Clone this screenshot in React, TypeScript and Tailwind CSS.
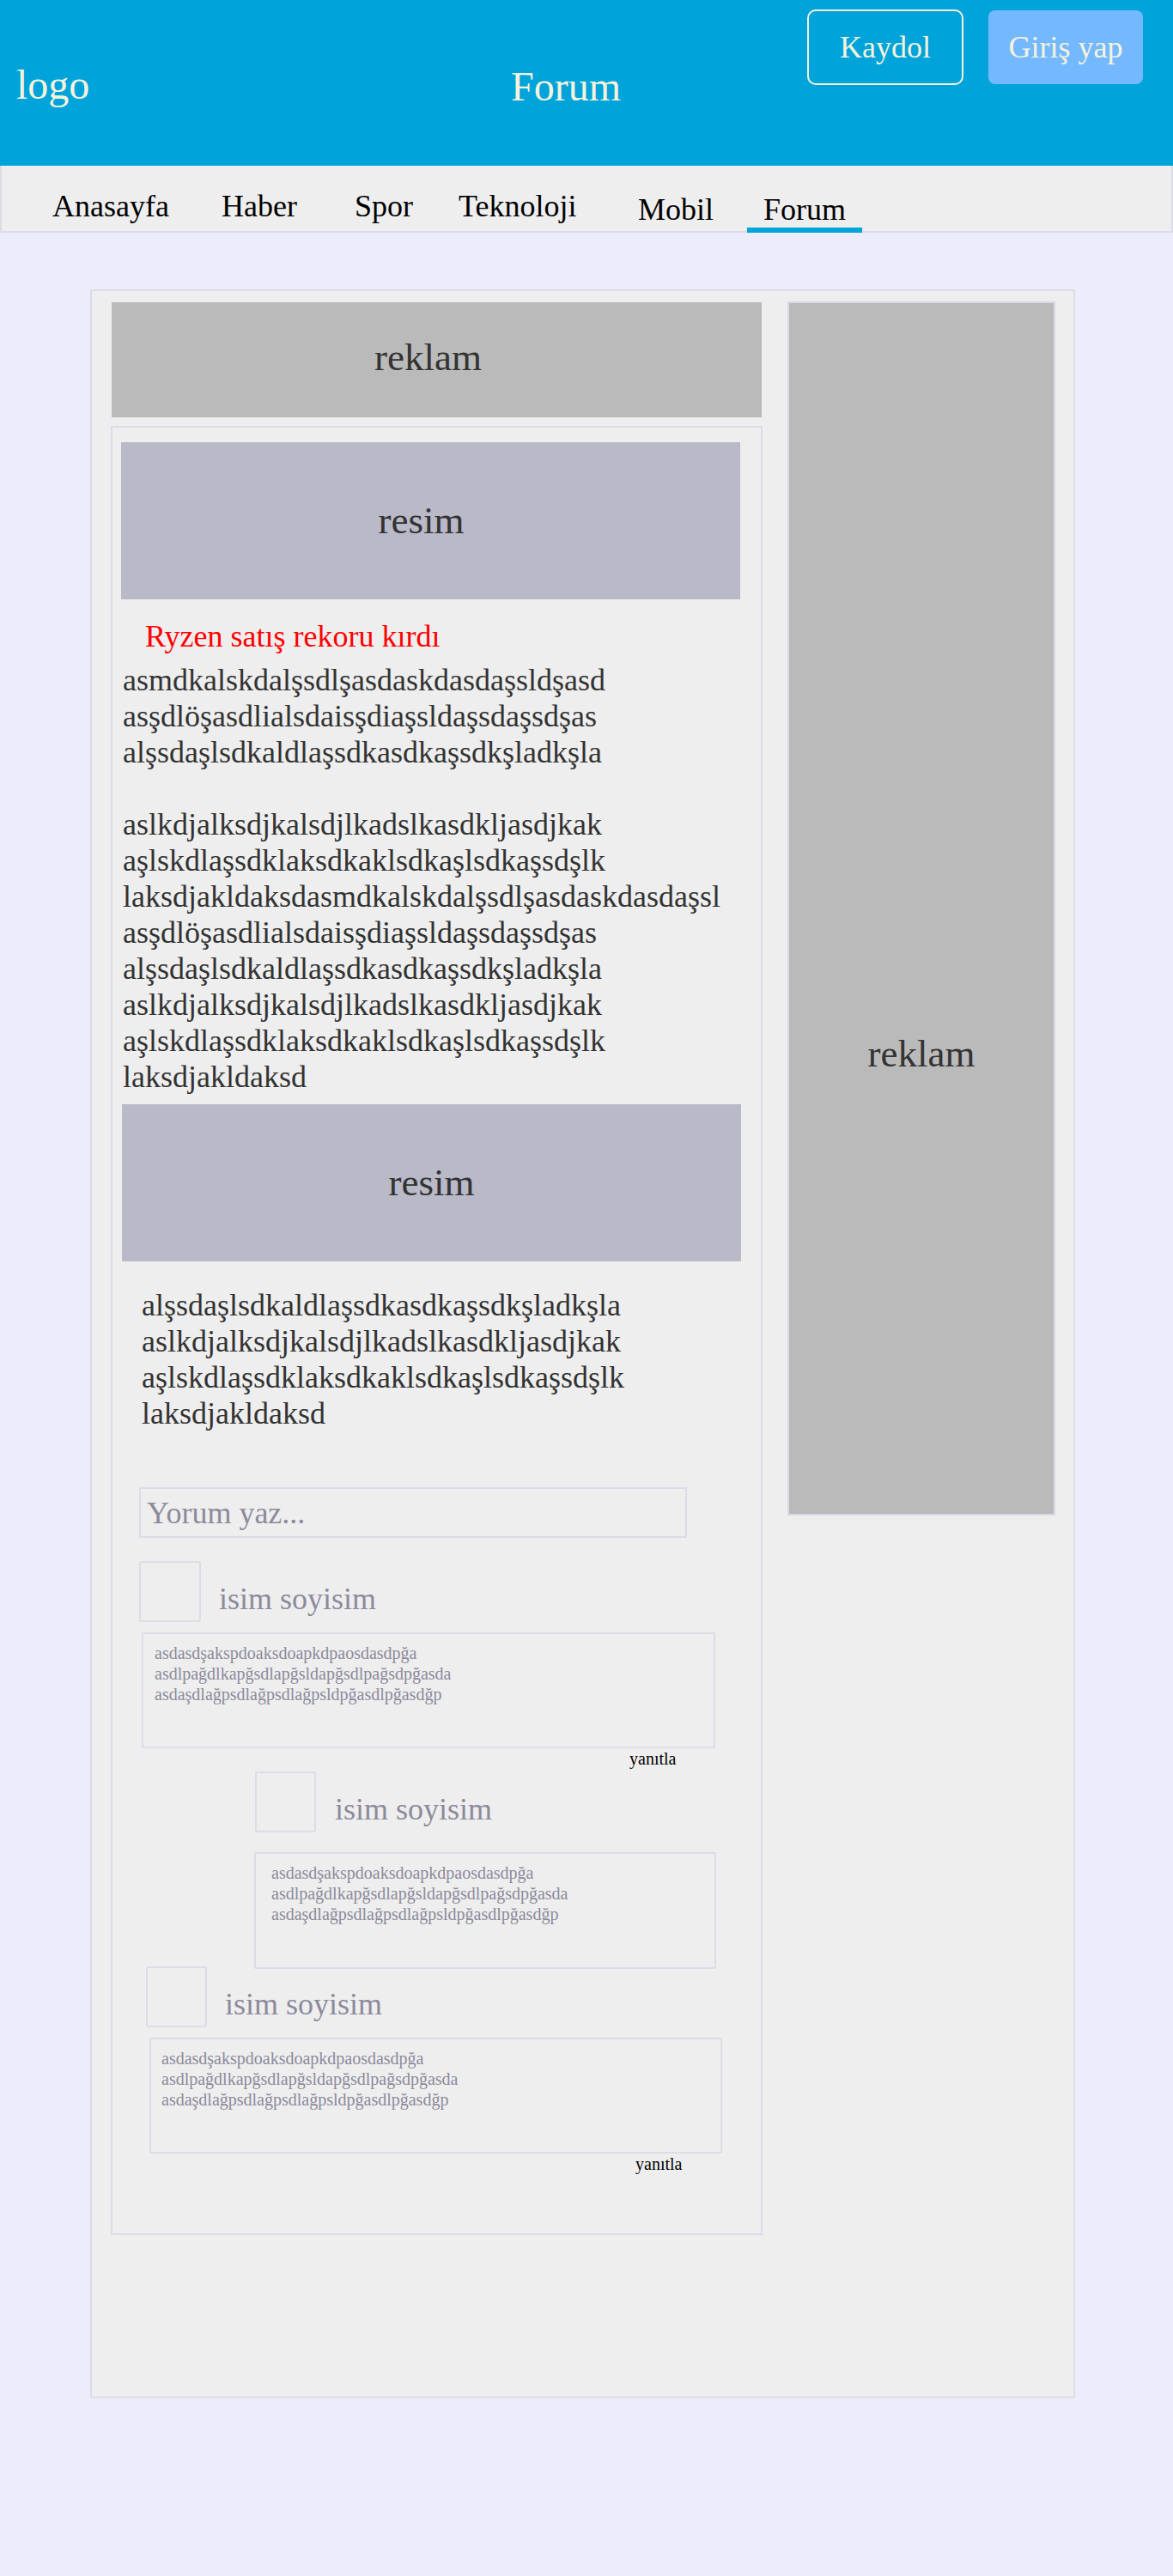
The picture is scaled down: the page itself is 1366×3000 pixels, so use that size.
import React from "react";

const body1 = [
  "asmdkalskdalşsdlşasdaskdasdaşsldşasd",
  "asşdlöşasdlialsdaisşdiaşsldaşsdaşsdşas",
  "alşsdaşlsdkaldlaşsdkasdkaşsdkşladkşla",
  "",
  "aslkdjalksdjkalsdjlkadslkasdkljasdjkak",
  "aşlskdlaşsdklaksdkaklsdkaşlsdkaşsdşlk",
  "laksdjakldaksdasmdkalskdalşsdlşasdaskdasdaşsl",
  "asşdlöşasdlialsdaisşdiaşsldaşsdaşsdşas",
  "alşsdaşlsdkaldlaşsdkasdkaşsdkşladkşla",
  "aslkdjalksdjkalsdjlkadslkasdkljasdjkak",
  "aşlskdlaşsdklaksdkaklsdkaşlsdkaşsdşlk",
  "laksdjakldaksd",
];

const body2 = [
  "alşsdaşlsdkaldlaşsdkasdkaşsdkşladkşla",
  "aslkdjalksdjkalsdjlkadslkasdkljasdjkak",
  "aşlskdlaşsdklaksdkaklsdkaşlsdkaşsdşlk",
  "laksdjakldaksd",
];

const commentLines = [
  "asdasdşakspdoaksdoapkdpaosdasdpğa",
  "asdlpağdlkapğsdlapğsldapğsdlpağsdpğasda",
  "asdaşdlağpsdlağpsdlağpsldpğasdlpğasdğp",
];

function Lines({ lines }: { lines: string[] }) {
  return (
    <>
      {lines.map((l, i) => (
        <div key={i} className="h-[42px] whitespace-nowrap">
          {l}
        </div>
      ))}
    </>
  );
}

function CommentText() {
  return (
    <>
      {commentLines.map((l, i) => (
        <div key={i} className="whitespace-nowrap">
          {l}
        </div>
      ))}
    </>
  );
}

export default function App() {
  return (
    <div className="w-[1366px] min-h-[3000px] bg-[#ececfa] font-['Liberation_Serif',serif]">
      {/* Header */}
      <header className="flex h-[193px] items-start bg-[#00a3da] text-[#f5f3dc]">
        <div className="w-[595px] pl-[19px] pt-[75px] text-[48px] leading-none">logo</div>
        <div className="pt-[77px] text-[48px] leading-none">Forum</div>
        <div className="ml-auto flex items-start gap-[29px] pr-[35px] pt-[11px]">
          <button className="flex h-[88px] w-[182px] items-center justify-center rounded-[10px] border-2 border-[#f5f3dc] text-[36px] leading-none text-[#f5f3dc]">
            Kaydol
          </button>
          <button className="mt-[1px] flex h-[86px] w-[180px] items-center justify-center rounded-[8px] bg-[#74b9ff] text-[36px] leading-none text-[#f5f3dc]">
            Giriş yap
          </button>
        </div>
      </header>

      {/* Nav */}
      <nav className="flex h-[78px] items-start border-x-2 border-b-2 border-[#dcdce8] bg-[#eeeeee] pl-[59px] text-[36px] leading-none text-black">
        <div className="mt-[29px] w-[197px]">Anasayfa</div>
        <div className="mt-[29px] w-[155px]">Haber</div>
        <div className="mt-[29px] w-[121px]">Spor</div>
        <div className="mt-[29px] w-[209px]">Teknoloji</div>
        <div className="mt-[33px] w-[127px]">Mobil</div>
        <div className="mt-[33px] border-b-[6px] border-[#00a3da] px-[19px] pb-[3px]">Forum</div>
      </nav>

      {/* Main */}
      <main className="pl-[105px] pt-[66px]">
        <div className="flex w-[1147px] items-start border-2 border-[#dcdce8] bg-[#eeeeee] pb-[188px] pl-[22px] pt-[13px]">
          {/* Left column */}
          <div className="w-[759px]">
            <div className="ml-[1px] flex h-[134px] w-[757px] items-center justify-center bg-[#bababa] pb-[6px] pr-[20px] text-[45px] leading-none text-[#333]">
              reklam
            </div>

            <article className="mt-[10px] border-2 border-[#dcdce8] pb-[69px] pl-[10px] pt-[17px]">
              <div className="flex h-[183px] w-[721px] items-center justify-center bg-[#b9b9c8] pr-[22px] text-[45px] leading-none text-[#333]">
                resim
              </div>
              <h2 className="ml-[28px] mt-[22px] text-[36px] leading-[42px] text-[#ff0000]">
                Ryzen satış rekoru kırdı
              </h2>
              <div className="ml-[2px] mt-[9px] text-[36px] leading-[42px] text-[#333]">
                <Lines lines={body1} />
              </div>
              <div className="ml-[1px] mt-[11px] flex h-[183px] w-[721px] items-center justify-center bg-[#b9b9c8] text-[45px] leading-none text-[#333]">
                resim
              </div>
              <div className="ml-[24px] mt-[30px] text-[36px] leading-[42px] text-[#333]">
                <Lines lines={body2} />
              </div>

              <input
                className="ml-[21px] mt-[65px] block h-[59px] w-[638px] border-2 border-[#dcdce8] bg-transparent px-[7px] text-[36px] text-[#333] outline-none placeholder:text-[#8c8a9b]"
                placeholder="Yorum yaz..."
              />

              {/* Comment 1 */}
              <div className="ml-[21px] mt-[27px] flex items-start">
                <div className="h-[71px] w-[72px] rounded-[3px] border-2 border-[#dcdce8]" />
                <div className="ml-[21px] mt-[23px] text-[36px] leading-[42px] text-[#8c8a9b]">isim soyisim</div>
              </div>
              <div className="ml-[24px] mt-[12px] h-[135px] w-[668px] rounded-[2px] border-2 border-[#dcdce8] pl-[13px] pt-[10px] text-[20px] leading-[24px] text-[#8c8a9b]">
                <CommentText />
              </div>
              <div className="ml-[592px] text-[20px] leading-[24px] text-black">yanıtla</div>

              {/* Reply */}
              <div className="ml-[156px] mt-[3px] flex items-start">
                <div className="h-[71px] w-[71px] rounded-[3px] border-2 border-[#dcdce8]" />
                <div className="ml-[22px] mt-[23px] text-[36px] leading-[42px] text-[#8c8a9b]">isim soyisim</div>
              </div>
              <div className="ml-[155px] mt-[23px] h-[136px] w-[538px] rounded-[2px] border-2 border-[#dcdce8] pl-[18px] pt-[10px] text-[20px] leading-[24px] text-[#8c8a9b]">
                <CommentText />
              </div>

              {/* Comment 3 */}
              <div className="ml-[29px] mt-[-3px] flex items-start">
                <div className="h-[71px] w-[71px] rounded-[3px] border-2 border-[#dcdce8]" />
                <div className="ml-[21px] mt-[23px] text-[36px] leading-[42px] text-[#8c8a9b]">isim soyisim</div>
              </div>
              <div className="ml-[33px] mt-[12px] h-[135px] w-[667px] rounded-[2px] border-2 border-[#dcdce8] pl-[12px] pt-[10px] text-[20px] leading-[24px] text-[#8c8a9b]">
                <CommentText />
              </div>
              <div className="ml-[599px] text-[20px] leading-[24px] text-black">yanıtla</div>
            </article>
          </div>

          {/* Right column */}
          <div className="ml-[29px] mt-[-1px] flex h-[1414px] w-[312px] flex-col items-center border-2 border-[#d8d8e8] bg-[#bababa] pt-[852px] text-[45px] leading-none text-[#333]">
            reklam
          </div>
        </div>
      </main>
    </div>
  );
}
